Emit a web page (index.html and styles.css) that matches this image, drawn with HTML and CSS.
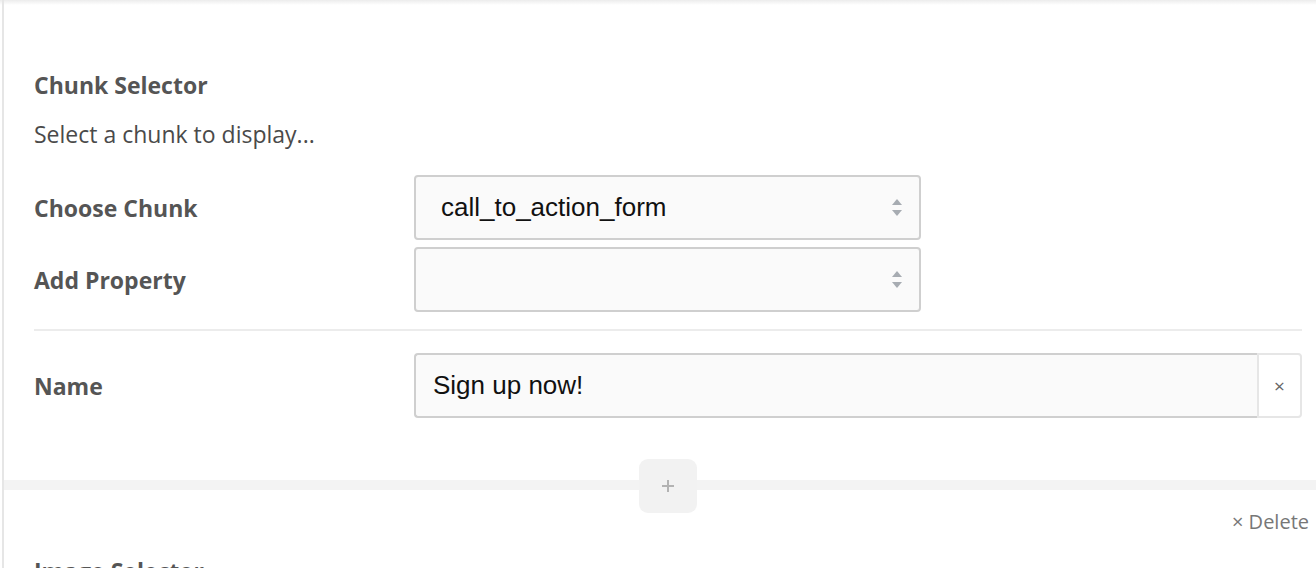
FILE: index.html
```html
<!DOCTYPE html>
<html>
<head>
<meta charset="utf-8">
<link rel="stylesheet" href="styles.css">
</head>
<body>
<div class="page">
  <section class="block">
    <h2 class="block-title">Chunk Selector</h2>
    <p class="block-desc">Select a chunk to display...</p>
    <div class="form-row">
      <label class="form-label">Choose Chunk</label>
      <div class="select">
        <span class="select-value">call_to_action_form</span>
        <span class="select-arrows"><i class="up"></i><i class="down"></i></span>
      </div>
    </div>
    <div class="form-row">
      <label class="form-label">Add Property</label>
      <div class="select">
        <span class="select-value"></span>
        <span class="select-arrows"><i class="up"></i><i class="down"></i></span>
      </div>
    </div>
    <hr class="divider">
    <div class="form-row name-row">
      <label class="form-label">Name</label>
      <div class="input-group">
        <div class="text-input">Sign up now!</div>
        <button class="clear-btn">×</button>
      </div>
    </div>
  </section>
  <div class="separator">
    <button class="add-btn"><svg width="12" height="12" viewBox="0 0 12 12"><path d="M6 0V12M0 6H12" stroke="#b3b3b3" stroke-width="2"/></svg></button>
  </div>
  <section class="block block-next">
    <div class="delete-row"><span class="delete">× Delete</span></div>
    <h2 class="block-title">Image Selector</h2>
  </section>
</div>
</body>
</html>
```
FILE: styles.css
```css
html, body {
  margin: 0;
  padding: 0;
  background: #fff;
  overflow: hidden;
}
body {
  font-family: "Open Sans", "Noto Sans", sans-serif;
  color: #4a4a4a;
  height: 568px;
  background: linear-gradient(#ececec 0, #fff 5px);
}
.page {
  margin-left: 2px;
  border-left: 2px solid #e6e6e6;
  min-height: 568px;
}
.block {
  padding: 68px 14px 0 30px;
}
.block-title {
  margin: 0;
  font-size: 23px;
  font-weight: 700;
  color: #555;
  line-height: 34px;
}
.block-desc {
  margin: 17px 0 0;
  font-size: 23px;
  line-height: 30px;
  color: #4a4a4a;
}
.form-row {
  display: grid;
  grid-template-columns: 380px 507px;
  align-items: center;
  margin-top: 7px;
}
.block-desc + .form-row {
  margin-top: 26px;
}
.form-label {
  font-size: 23px;
  font-weight: 700;
  color: #555;
}
.select {
  height: 61px;
  border: 2px solid #cfcfcf;
  border-radius: 4px;
  background: #fafafa;
  display: flex;
  align-items: center;
  justify-content: space-between;
  padding: 0 17px 0 25px;
  font-family: "Liberation Sans", Arial, sans-serif;
  font-size: 26px;
  color: #111;
}
.select-arrows {
  display: flex;
  flex-direction: column;
  gap: 5px;
}
.select-arrows i {
  display: block;
  width: 0;
  height: 0;
  border-left: 5px solid transparent;
  border-right: 5px solid transparent;
}
.select-arrows .up {
  border-bottom: 6px solid #a7acb2;
}
.select-arrows .down {
  border-top: 6px solid #a7acb2;
}
.divider {
  border: 0;
  border-top: 2px solid #ececec;
  margin: 17px 0 22px;
}
.name-row {
  grid-template-columns: 380px 1fr;
  margin-top: 0;
}
.input-group {
  display: flex;
  height: 65px;
}
.text-input {
  flex: 1;
  box-sizing: border-box;
  border: 2px solid #cfcfcf;
  border-right: 0;
  border-radius: 4px 0 0 4px;
  background: #fafafa;
  display: flex;
  align-items: center;
  padding-left: 17px;
  font-family: "Liberation Sans", Arial, sans-serif;
  font-size: 26px;
  color: #111;
}
.clear-btn {
  width: 45px;
  box-sizing: border-box;
  border: 2px solid #e6e6e6;
  border-radius: 0 4px 4px 0;
  background: #fff;
  color: #666;
  font-family: "Open Sans", sans-serif;
  font-size: 19px;
  padding: 0;
  margin: 0;
}
.separator {
  position: relative;
  height: 10px;
  background: #f3f3f3;
  margin-top: 62px;
}
.add-btn {
  position: absolute;
  left: 635px;
  top: -21px;
  width: 58px;
  height: 54px;
  border: 0;
  border-radius: 9px;
  background: #f2f2f2;
  display: flex;
  align-items: center;
  justify-content: center;
  padding: 0;
}
.block-next {
  padding-top: 0;
  padding-right: 7px;
}
.delete-row {
  display: flex;
  justify-content: flex-end;
  margin-top: 20px;
}
.delete {
  font-size: 20px;
  color: #777;
  line-height: 24px;
}
.block-next .block-title {
  margin-top: 20px;
}
```
